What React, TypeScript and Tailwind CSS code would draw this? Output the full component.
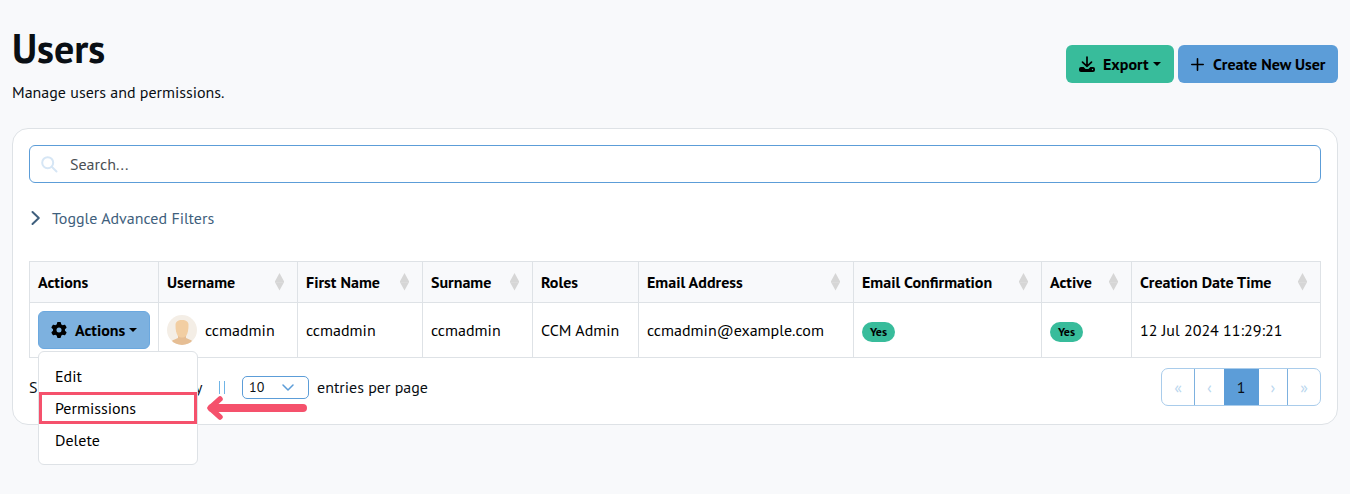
import React from "react";
import { FaGear } from "react-icons/fa6";

const columns = [
  { label: "Actions", width: "w-[129px]", sortable: false },
  { label: "Username", width: "w-[139px]", sortable: true },
  { label: "First Name", width: "w-[125px]", sortable: true },
  { label: "Surname", width: "w-[110px]", sortable: true },
  { label: "Roles", width: "w-[106px]", sortable: false },
  { label: "Email Address", width: "w-[215px]", sortable: true },
  { label: "Email Confirmation", width: "w-[188px]", sortable: true },
  { label: "Active", width: "w-[90px]", sortable: true },
  { label: "Creation Date Time", width: "w-[189px]", sortable: true },
];

const cell = "border border-[#dee2e6] px-2 py-0 text-left whitespace-nowrap";

function Caret() {
  return <span className="ml-1 inline-block border-x-[4px] border-t-[4px] border-x-transparent border-t-black" />;
}

function SortIcon() {
  return (
    <svg width="9" height="18" viewBox="0 0 9 18" className="mr-[5px] shrink-0" fill="#d6d6d6">
      <path d="M4.5 0 9 8.2H0zM0 9.2h9L4.5 17.5z" />
      <path d="M0 8h9v1.5H0z" />
    </svg>
  );
}

function DownloadIcon() {
  return (
    <svg width="16" height="16" viewBox="0 0 16 16" fill="none" stroke="#000" strokeLinecap="round" strokeLinejoin="round">
      <path d="M8 1v9.2M3.5 6.2 8 10.4l4.5-4.2" strokeWidth="1.7" />
      <path d="M2 11h2.6L6.6 13h2.8l2-2H14a2 2 0 0 1 2 2v1a2 2 0 0 1-2 2H2a2 2 0 0 1-2-2v-1a2 2 0 0 1 2-2z" fill="#000" stroke="none" />
      <circle cx="13.5" cy="13.500" r=".7" fill="#38bc9b" stroke="none" />
    </svg>
  );
}

function Avatar() {
  return (
    <svg width="30" height="30" viewBox="0 0 30 30" className="mr-2 shrink-0">
      <defs>
        <clipPath id="avatar-clip">
          <circle cx="15" cy="15" r="15" />
        </clipPath>
      </defs>
      <g clipPath="url(#avatar-clip)">
        <path d="M0 0h30v30H0z" fill="#f4eee6" />
        <path d="M3 30c0-4 3-5 8-7v-3h8v3c5 2 8 3 8 7z" fill="#e6be94" />
        <path d="M8.500 10C8.500 6.500 11 5 15 5s6.500 1.500 6.500 5c0 5-.8 8-2 10.200-1 1.800-2.500 2.300-4.500 2.300s-3.500-.5-4.500-2.300c-1.200-2.200-2-5.200-2-10.200z" fill="#f2cea2" />
      </g>
    </svg>
  );
}

function YesBadge() {
  return (
    <span className="mt-[3px] flex h-5 w-[33px] items-center justify-center rounded-full bg-[#38bc9b] text-[12px] font-bold">
      Yes
    </span>
  );
}

function ActionsMenu() {
  return (
    <div className="absolute top-[40px] left-0 z-10 h-[114px] w-[160px] rounded-[6px] border border-[#dee2e6] bg-white py-2">
      <div className="flex h-8 items-center px-4">Edit</div>
      <div className="flex h-8 w-[158px] items-center px-4 outline-[3px] -outline-offset-3 outline-[#f5516c] outline-solid">
        Permissions
      </div>
      <div className="flex h-8 items-center px-4">Delete</div>
    </div>
  );
}

function Pointer() {
  return (
    <svg width="102" height="26" viewBox="0 0 102 26" className="absolute top-[84px] left-[168px] z-10" fill="none" stroke="#f5516c" strokeLinecap="round" strokeLinejoin="round">
      <path d="M6 13h91" strokeWidth="8" />
      <path d="M14 4 4 13l10 9" strokeWidth="5.5" />
    </svg>
  );
}

function Pagination() {
  const side = "flex h-full items-center justify-center text-[#b9d6ee]";
  return (
    <div className="flex h-[38px] w-[160px] overflow-hidden rounded-[7px] border border-[#a9cceb]">
      <div className={`${side} w-[33px] border-r border-[#7db1df]`}>«</div>
      <div className={`${side} w-[29px]`}>‹</div>
      <div className="-my-px flex w-[35px] shrink-0 items-center justify-center bg-[#5c9dd8] pr-px">1</div>
      <div className={`${side} w-[28px]`}>›</div>
      <div className={`${side} flex-1 border-l border-[#7db1df]`}>»</div>
    </div>
  );
}

export default function App() {
  return (
    <main className="h-[494px] w-[1350px] overflow-hidden bg-[#f8f9fb] px-3 font-['PT_Sans','Noto_Sans',sans-serif] text-base leading-6 text-[#0a0f14]">
      <header className="flex h-32 items-start justify-between">
        <div>
          <h1 className="mt-6 text-[40px] leading-[48px] font-bold">Users</h1>
          <p className="mt-2">Manage users and permissions.</p>
        </div>
        <div className="mt-[45px] flex gap-1 font-bold text-black">
          <button className="flex h-[38px] w-[108px] items-center rounded-[6px] bg-[#38bc9b] pl-[13px]">
            <DownloadIcon />
            <span className="ml-2">Export</span>
            <Caret />
          </button>
          <button className="flex h-[38px] w-40 items-center rounded-[6px] bg-[#5c9dd8] pl-[13px]">
            <svg width="13" height="13" viewBox="0 0 13 13" stroke="#000" strokeWidth="1.6" strokeLinecap="round">
              <path d="M6.500.8v11.400M.8 6.500h11.400" />
            </svg>
            <span className="ml-[9px]">Create New User</span>
          </button>
        </div>
      </header>

      <section className="h-[297px] w-[1326px] rounded-[16px] border border-[#dee2e6] bg-white p-4">
        <div className="flex h-[38px] items-center rounded-[6px] border border-[#5c9dd8] pl-[11px] text-[#4a4f54]">
          <svg width="17" height="17" viewBox="0 0 17 17" fill="none" stroke="#d6e6f5" strokeWidth="2" strokeLinecap="round">
            <circle cx="6.700" cy="6.700" r="5.500" />
            <path d="m11 11 4.500 4.500" />
          </svg>
          <span className="ml-3">Search...</span>
        </div>

        <div className="mt-[23px] flex h-6 items-center text-[#3f5f7d]">
          <svg width="11" height="16" viewBox="0 0 11 16" fill="none" stroke="currentColor" strokeWidth="2" strokeLinecap="round" strokeLinejoin="round" className="ml-[2px]">
            <path d="m1.500 2 6.300 6-6.300 6" />
          </svg>
          <span className="ml-[10px]">Toggle Advanced Filters</span>
        </div>

        <table className="mt-[31px] w-[1292px] table-fixed border-collapse text-black">
          <thead>
            <tr className="h-[41px] bg-[#f8f9fb]">
              {columns.map((c) => (
                <th key={c.label} className={`${cell} ${c.width}`}>
                  <div className="flex items-center justify-between">
                    <span>{c.label}</span>
                    {c.sortable && <SortIcon />}
                  </div>
                </th>
              ))}
            </tr>
          </thead>
          <tbody>
            <tr className="h-[55px]">
              <td className={cell}>
                <div className="relative w-28">
                  <button className="flex h-[38px] w-28 items-center rounded-[6px] border border-[#6ba8df] bg-[#7db1df] pl-3 font-bold">
                    <FaGear size={16} />
                    <span className="ml-2">Actions</span>
                    <Caret />
                  </button>
                  <ActionsMenu />
                  <Pointer />
                </div>
              </td>
              <td className={cell}>
                <div className="flex items-center">
                  <Avatar />
                  ccmadmin
                </div>
              </td>
              <td className={cell}>ccmadmin</td>
              <td className={cell}>ccmadmin</td>
              <td className={cell}>CCM Admin</td>
              <td className={cell}>ccmadmin@example.com</td>
              <td className={cell}><YesBadge /></td>
              <td className={cell}><YesBadge /></td>
              <td className={cell}>12 Jul 2024 11:29:21</td>
            </tr>
          </tbody>
        </table>

        <footer className="mt-[10px] flex items-start justify-between">
          <div className="flex h-[38px] items-center">
            <span className="w-[174px] whitespace-nowrap">Showing 1 to 1 of 1 entry</span>
            <span className="mt-px ml-[16px] h-[13px] w-[6px] border-x border-[#6fb4e6]" />
            <div className="ml-[17px] flex h-[23px] w-[67px] items-center justify-between rounded-[5px] border border-[#5c9dd8] pr-[14px] pl-[6px] text-[14px]">
              10
              <svg width="12" height="7" viewBox="0 0 12 7" fill="none" stroke="#5c9dd8" strokeWidth="1.5" strokeLinecap="round" strokeLinejoin="round">
                <path d="m1 1 5 5 5-5" />
              </svg>
            </div>
            <span className="ml-2">entries per page</span>
          </div>
          <Pagination />
        </footer>
      </section>
    </main>
  );
}
